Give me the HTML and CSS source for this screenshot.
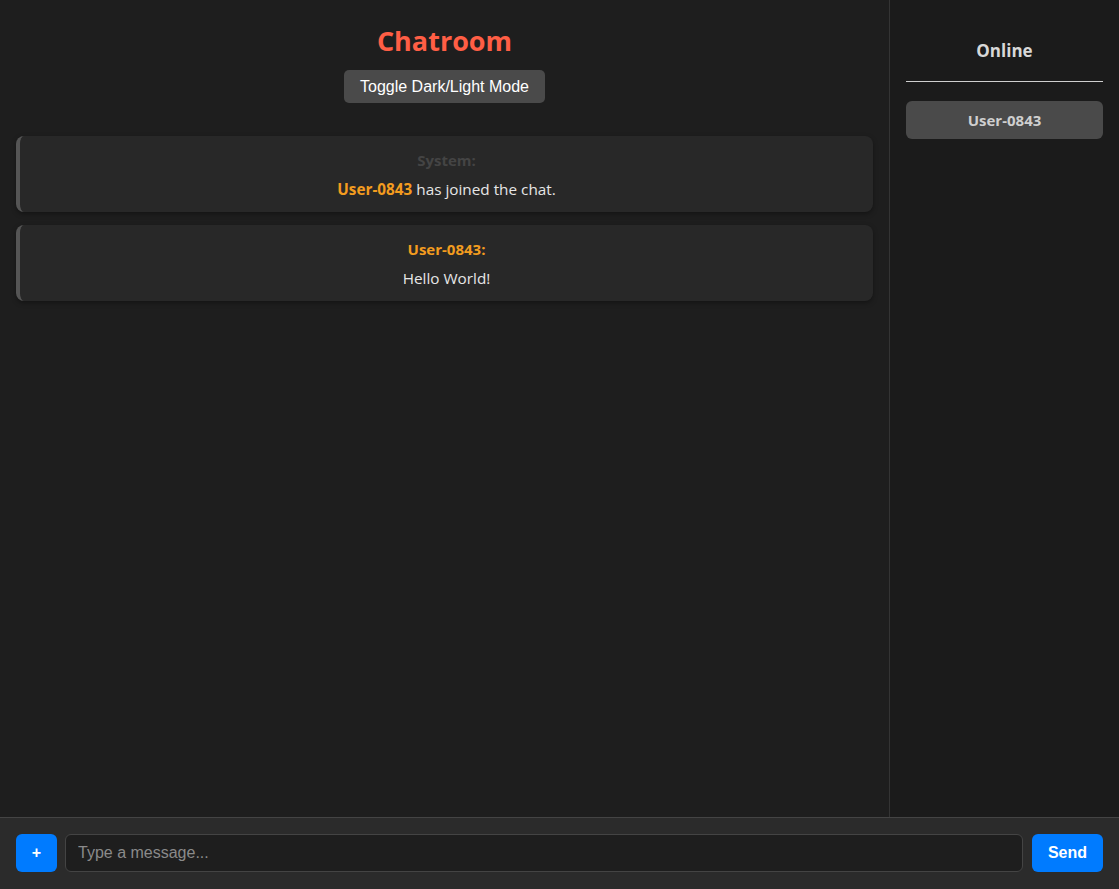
FILE: index.html
```html
<!DOCTYPE html>
<html lang="en">
<head>
<meta charset="utf-8">
<title>Chatroom</title>
<link rel="stylesheet" href="styles.css">
</head>
<body>
<div class="app">
  <div class="top">
    <main class="main">
      <header class="header">
        <h1 class="title">Chatroom</h1>
        <button class="toggle">Toggle Dark/Light Mode</button>
      </header>
      <section class="messages">
        <div class="msg">
          <div class="msg-name system">System:</div>
          <div class="msg-text"><span class="uname">User-0843</span> has joined the chat.</div>
        </div>
        <div class="msg">
          <div class="msg-name user">User-0843:</div>
          <div class="msg-text">Hello World!</div>
        </div>
      </section>
    </main>
    <aside class="sidebar">
      <h3 class="side-title">Online</h3>
      <div class="side-rule"></div>
      <div class="online-user">User-0843</div>
    </aside>
  </div>
  <footer class="composer">
    <button class="plus">+</button>
    <input class="input" type="text" placeholder="Type a message...">
    <button class="send">Send</button>
  </footer>
</div>
</body>
</html>
```
FILE: styles.css
```css
* { box-sizing: border-box; }
html, body { margin: 0; height: 100%; }
body {
  background: #1e1e1e;
  color: #e0e0e0;
  font-family: "Open Sans", "Noto Sans", sans-serif;
}
.app {
  display: flex;
  flex-direction: column;
  height: 889px;
}
.top {
  flex: 1;
  display: flex;
  min-height: 0;
}
.main {
  flex: 1;
  padding: 16px;
  display: flex;
  flex-direction: column;
}
.header {
  display: flex;
  flex-direction: column;
  align-items: center;
}
.title {
  margin: 7px 0 0;
  font-size: 27px;
  line-height: 36px;
  font-weight: 700;
  color: #ff5e45;
}
.toggle {
  margin-top: 11px;
  height: 33px;
  width: 201px;
  border: none;
  border-radius: 5px;
  background: #4a4a4a;
  color: #ffffff;
  font-family: "Liberation Sans", Arial, sans-serif;
  font-size: 16px;
  padding: 0;
}
.messages {
  margin-top: 33px;
  display: flex;
  flex-direction: column;
  gap: 13px;
}
.msg {
  height: 76px;
  background: #282828;
  border-left: 4px solid #555555;
  border-radius: 8px;
  box-shadow: 0 2px 5px rgba(0,0,0,0.35);
  text-align: center;
  padding: 13px 12px 0;
  font-size: 15px;
}
.msg-name {
  font-weight: 700;
  font-size: 15px;
  line-height: 22px;
}
.msg-name.system { color: #444444; }
.msg-name.user { color: #f39c1f; }
.msg-text {
  margin-top: 7px;
  line-height: 22px;
  color: #e6e6e6;
  font-size: 15.3px;
}
.uname { color: #f39c1f; font-weight: 700; }
.sidebar {
  width: 230px;
  flex-shrink: 0;
  border-left: 1px solid #343434;
  background: #1b1b1b;
  padding: 16px;
}
.side-title {
  margin: 23px 0 0;
  text-align: center;
  font-size: 17px;
  line-height: 24px;
  font-weight: 700;
  color: #d8d8d8;
}
.side-rule {
  margin-top: 18px;
  height: 1px;
  background: #cfcfcf;
}
.online-user {
  margin-top: 19px;
  height: 38px;
  line-height: 38px;
  background: #4a4a4a;
  border-radius: 6px;
  text-align: center;
  font-weight: 700;
  font-size: 15px;
  color: #cfcfcf;
}
.composer {
  height: 72px;
  flex-shrink: 0;
  background: #2b2b2b;
  border-top: 1px solid #444444;
  display: flex;
  align-items: flex-start;
  gap: 8px;
  padding: 16px 16px 0;
}
.plus, .send {
  height: 38px;
  border: none;
  border-radius: 6px;
  background: #007bff;
  color: #ffffff;
  font-family: "Liberation Sans", Arial, sans-serif;
  font-weight: 700;
  font-size: 16px;
  padding: 0;
}
.plus { width: 41px; }
.send { width: 71px; margin-left: 1px; }
.input {
  flex: 1;
  height: 38px;
  background: #1e1e1e;
  border: 1px solid #444444;
  border-radius: 6px;
  padding: 0 12px;
  color: #e0e0e0;
  font-family: "Liberation Sans", Arial, sans-serif;
  font-size: 16px;
  outline: none;
}
.input::placeholder { color: #8a8a8a; }
```
